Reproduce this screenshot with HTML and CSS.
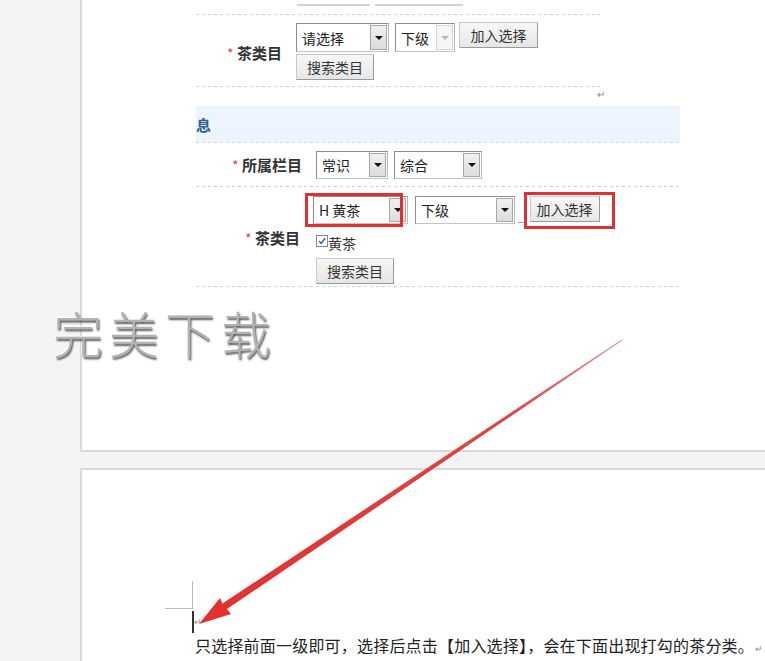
FILE: index.html
```html
<!DOCTYPE html>
<html lang="zh">
<head>
<meta charset="utf-8">
<title>茶类目</title>
<link rel="stylesheet" href="styles.css">
</head>
<body>
<div class="canvas">
  <div class="page page1">
    <div class="shot shot-a">
      <div class="cutoff"><span class="cut cut1"></span><span class="cut cut2"></span></div>
      <div class="dots"></div>
      <div class="row row-a">
        <div class="label"><span class="star">*</span> 茶类目</div>
        <div class="controls">
          <div class="line">
            <div class="sel w93"><span class="val">请选择</span><span class="arr"><i></i></span></div>
            <div class="sel w60 ml6"><span class="val">下级</span><span class="arr off"><i></i></span></div>
            <div class="btn w79 ml4 up1">加入选择</div>
          </div>
          <div class="line mt2">
            <div class="btn w78">搜索类目</div>
          </div>
        </div>
      </div>
      <div class="dots"></div>
      <div class="retline"><span class="ret">↵</span></div>
    </div>

    <div class="shot shot-b">
      <div class="head"><span class="headtxt">息</span></div>
      <div class="dots"></div>
      <div class="row row-b1">
        <div class="label"><span class="star">*</span> 所属栏目</div>
        <div class="controls">
          <div class="line">
            <div class="sel w72 h28"><span class="val">常识</span><span class="arr"><i></i></span></div>
            <div class="sel w88 h28 ml6"><span class="val">综合</span><span class="arr"><i></i></span></div>
          </div>
        </div>
      </div>
      <div class="dots"></div>
      <div class="row row-b2">
        <div class="label"><span class="star">*</span> 茶类目</div>
        <div class="controls">
          <div class="line shift">
            <div class="sel w95 h28"><span class="val">H 黄茶</span><span class="arr"><i></i></span></div>
            <div class="sel w100 h28 ml7"><span class="val">下级</span><span class="arr"><i></i></span></div>
            <span class="tick">_</span>
            <div class="btn w70 h25 ml6">加入选择</div>
          </div>
          <div class="line mt8 check">
            <span class="box"><svg viewBox="0 0 12 12" width="12" height="12"><path d="M2.5 6.2 L5 9 L9.8 2.6" fill="none" stroke="#2b4fa8" stroke-width="1.6"/></svg></span><span class="ctext">黄茶</span>
          </div>
          <div class="line mt8">
            <div class="btn w78 h25">搜索类目</div>
          </div>
        </div>
      </div>
      <div class="dots"></div>
      <div class="redbox rb1"></div>
      <div class="redbox rb2"></div>
    </div>
  </div>

  <div class="page page2">
    <div class="corner"></div>
    <div class="cursorline"><span class="caret"></span><span class="ret2">↵</span></div>
    <p class="para">只选择前面一级即可，选择后点击【加入选择】，会在下面出现打勾的茶分类。<span class="ret3">↵</span></p>
  </div>
</div>

<div class="watermark">完美下载</div>

<svg class="arrow" width="765" height="661" viewBox="0 0 765 661">
  <defs>
    <linearGradient id="fade" x1="622" y1="340" x2="200" y2="624" gradientUnits="userSpaceOnUse">
      <stop offset="0" stop-color="#d9a0a0"/>
      <stop offset="0.25" stop-color="#d84848"/>
      <stop offset="1" stop-color="#e2302f"/>
    </linearGradient>
  </defs>
  <polygon fill="url(#fade)" points="199,624 231,614 227,609 622.3,340.6 621.7,339.4 222.5,603.5 220,598"/>
</svg>
</body>
</html>
```

FILE: styles.css
```css
html, body {
  margin: 0;
  padding: 0;
}
body {
  width: 765px;
  height: 661px;
  overflow: hidden;
  position: relative;
  background: #f4f3f6;
  font-family: "Noto Sans CJK SC", "Noto Sans", sans-serif;
  color: #333;
}
.canvas {
  padding-left: 80px;
}
.page {
  background: #ffffff;
  border-left: 2px solid #d8d7db;
}
.page1 {
  height: 452px;
  border-bottom: 2px solid #d8d7db;
  box-sizing: border-box;
  padding-left: 114px;
  position: relative;
}
.page2 {
  margin-top: 16px;
  border-top: 2px solid #d8d7db;
  height: 200px;
  overflow: hidden;
}

/* embedded screenshots */
.shot {
  position: relative;
}
.shot-a {
  width: 404px;
}
.shot-b {
  width: 484px;
}
.cutoff {
  height: 14px;
  display: flex;
  gap: 5px;
  padding-left: 101px;
  box-sizing: border-box;
}
.cut {
  display: block;
  height: 2px;
  margin-top: 4px;
  background: #d2d2d2;
}
.cut1 { width: 73px; }
.cut2 { width: 88px; }
.dots {
  height: 1px;
  background: repeating-linear-gradient(90deg, #c4d6df 0 3px, transparent 3px 6px);
}
.row {
  display: grid;
  align-items: center;
}
.row-a {
  grid-template-columns: 86px 1fr;
  column-gap: 14px;
  height: 71px;
}
.row-b1 {
  grid-template-columns: 106px 1fr;
  column-gap: 14px;
  height: 43px;
}
.row-b2 {
  grid-template-columns: 104px 1fr;
  column-gap: 16px;
  height: 99px;
}
.label {
  text-align: right;
  font-size: 15px;
  font-weight: bold;
  color: #333;
  white-space: nowrap;
}
.row-a .label {
  padding-top: 3px;
}
.row-b2 .label {
  padding-top: 2px;
}
.star {
  color: #e0485a;
  font-weight: normal;
  font-size: 14px;
}
.controls {
  display: flex;
  flex-direction: column;
  align-self: start;
}
.row-a .controls { padding-top: 8px; }
.row-b1 .controls { padding-top: 8px; }
.row-b2 .controls { padding-top: 9px; }
.line {
  display: flex;
  align-items: flex-start;
}
.line.shift {
  margin-left: -3px;
}
.mt2 { margin-top: 2px; }
.mt8 { margin-top: 8px; }
.ml4 { margin-left: 4px; }
.ml6 { margin-left: 6px; }
.ml7 { margin-left: 7px; }
.up1 { margin-top: -1px; }

.sel {
  height: 29px;
  box-sizing: border-box;
  border: 1px solid #8e8e8e;
  border-right-color: #b9b9b9;
  border-bottom-color: #c4c4c4;
  background: #fff;
  display: flex;
  align-items: stretch;
  font-size: 14px;
  color: #222;
}
.sel .val {
  flex: 1;
  padding-left: 5px;
  display: flex;
  align-items: center;
  white-space: nowrap;
}
.sel .arr {
  width: 17px;
  margin: 1px;
  box-sizing: border-box;
  border: 1px solid #a8a8a8;
  background: linear-gradient(#f1f1f1, #dcdcdc);
  display: flex;
  align-items: center;
  justify-content: center;
}
.sel .arr i {
  display: block;
  width: 0;
  height: 0;
  border-left: 4px solid transparent;
  border-right: 4px solid transparent;
  border-top: 4px solid #111;
}
.sel .arr.off {
  background: #f6f6f6;
  border-color: #d6d6d6;
}
.sel .arr.off i {
  border-top-color: #b8b8b8;
}
.h28 { height: 28px; }
.h25 { height: 25px; }
.w60 { width: 60px; }
.w70 { width: 70px; }
.w72 { width: 72px; }
.w78 { width: 78px; }
.w79 { width: 79px; }
.w88 { width: 88px; }
.w93 { width: 93px; }
.w95 { width: 95px; }
.w100 { width: 100px; }

.btn {
  height: 26px;
  box-sizing: border-box;
  border: 1px solid #c9c9c9;
  border-right-color: #9a9a9a;
  border-bottom-color: #9a9a9a;
  background: linear-gradient(#f7f7f7, #e6e6e6);
  font-size: 14px;
  color: #333;
  display: flex;
  align-items: center;
  justify-content: center;
  white-space: nowrap;
}
.tick {
  font-size: 10px;
  color: #666;
  margin-left: 3px;
  margin-top: 16px;
  line-height: 10px;
}
.check {
  align-items: center;
  font-size: 14px;
  color: #333;
}
.box {
  width: 12px;
  height: 12px;
  box-sizing: border-box;
  border: 1px solid #7a8aa8;
  background: #fff;
  display: flex;
}
.box svg {
  width: 10px;
  height: 10px;
}
.ctext {
  margin-top: 4px;
  line-height: 14px;
}
.retline {
  height: 19px;
  position: relative;
}
.ret {
  position: absolute;
  left: 401px;
  top: -1px;
  font-size: 10px;
  color: #888;
}
.head {
  height: 36px;
  background: #eef4fd;
  overflow: hidden;
  display: flex;
  align-items: center;
}
.headtxt {
  margin-left: 0;
  font-size: 15px;
  font-weight: bold;
  color: #2d5c9a;
}
.redbox {
  position: absolute;
  border: 3px solid #df3134;
  box-sizing: border-box;
}
.rb1 {
  left: 109px;
  top: 87px;
  width: 98px;
  height: 34px;
}
.rb2 {
  left: 328px;
  top: 86px;
  width: 91px;
  height: 37px;
}

/* page 2 */
.corner {
  margin-top: 111px;
  margin-left: 83px;
  width: 28px;
  height: 28px;
  box-sizing: border-box;
  border-right: 1px solid #bdbdbd;
  border-bottom: 1px solid #bdbdbd;
}
.cursorline {
  margin-left: 110px;
  margin-top: 2px;
  height: 22px;
  display: flex;
  align-items: flex-end;
}
.caret {
  display: block;
  width: 2px;
  height: 22px;
  background: #333;
}
.ret2 {
  font-size: 9px;
  color: #888;
  line-height: 10px;
  margin-bottom: 6px;
}
.para {
  margin: 2px 0 0 113px;
  font-size: 16px;
  letter-spacing: 0.2px;
  line-height: 20px;
  color: #222;
  white-space: nowrap;
}
.ret3 {
  font-size: 9px;
  color: #888;
  margin-left: 1px;
}

/* overlays */
.watermark {
  position: absolute;
  left: 53px;
  top: 296px;
  font-size: 50px;
  letter-spacing: 6px;
  font-weight: 300;
  color: #b2b2b2;
  text-shadow: 1px 2px 2px #555555, -1px -1px 0 #ffffff;
  white-space: nowrap;
}
.arrow {
  position: absolute;
  left: 0;
  top: 0;
  pointer-events: none;
}
```
